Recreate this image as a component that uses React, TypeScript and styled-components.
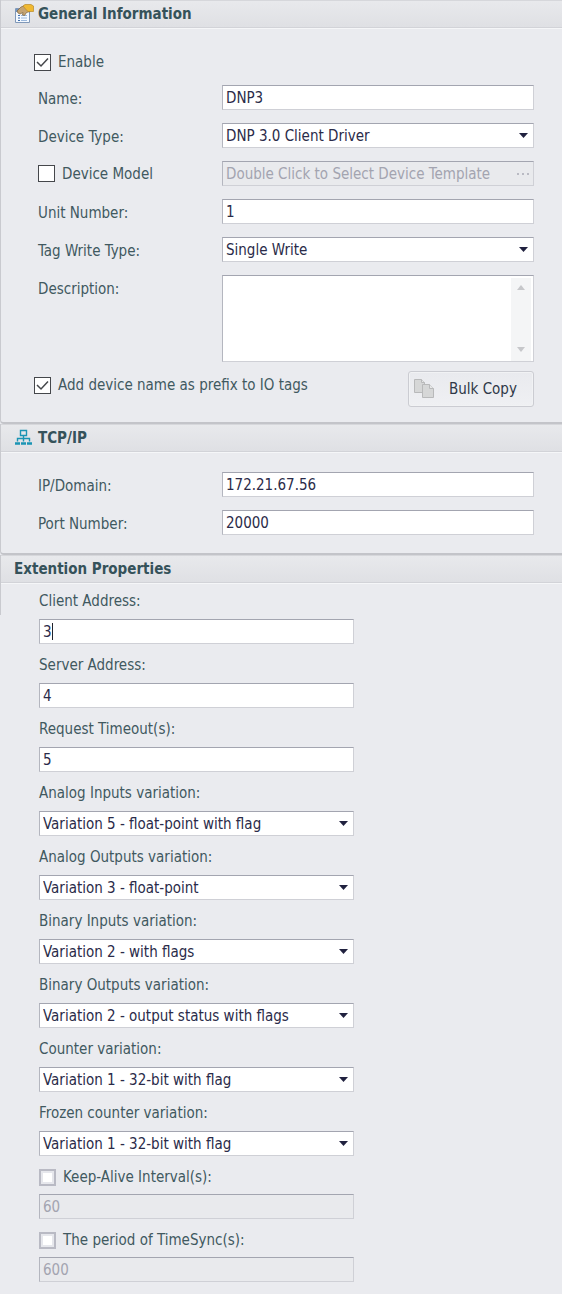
import React, { useId, useState } from "react";
import styled, { createGlobalStyle, css } from "styled-components";

const GlobalStyle = createGlobalStyle`
  *, *::before, *::after { box-sizing: border-box; }
  body {
    margin: 0;
    background: #eaebef;
    color: #41595f;
    font-family: "DejaVu Sans Condensed", Tahoma, "Noto Sans", sans-serif;
    font-size: 15px;
    line-height: 20px;
  }
`;

const Page = styled.main`
  display: flex;
  flex-direction: column;
  padding-bottom: 11px;
`;

const Panel = styled.section`
  border-left: 1px solid #c9cacf;
  border-bottom: 2px solid #c3c4c9;
  border-bottom-left-radius: 4px;
`;

const OpenPanel = styled.section`
  padding-left: 1px;
  background: linear-gradient(#c9cacf, #c9cacf) 0 0 / 1px 60px no-repeat;
`;

const PanelHeader = styled.header`
  display: flex;
  align-items: center;
  gap: 4px;
  height: 28px;
  padding-left: 13px;
  border-top: 1px solid #d6d7db;
  border-bottom: 1px solid #d2d3d8;
  box-shadow: 0 1px 0 #f5f6f8;
  background: linear-gradient(#e8e9ec, #dfe0e4);
`;

const PanelTitle = styled.h2`
  margin: 0;
  color: #35525a;
  font-size: 15px;
  line-height: 20px;
  font-weight: 700;
`;

const PanelBody = styled.div`
  display: flex;
  flex-direction: column;
  gap: 13px;
  padding: 20px 28px 18px 37px;
`;

const GeneralBody = styled(PanelBody)`
  padding-top: 24px;
  padding-bottom: 15px;
`;

const Row = styled.div`
  display: grid;
  grid-template-columns: 184px minmax(0, 1fr);
  align-items: start;
`;

const RowLabel = styled.label`
  padding-top: 4px;
  line-height: 20px;
`;

const CheckLabel = styled.label<{ $outdent?: boolean }>`
  display: flex;
  align-items: center;
  gap: 7px;
  margin-left: ${(p) => (p.$outdent ? "-4px" : "0")};
`;

const RowCheckLabel = styled(CheckLabel)`
  height: 25px;
`;

const CheckBox = styled.input<{ $soft?: boolean }>`
  appearance: none;
  flex: none;
  width: 17px;
  height: 17px;
  margin: 0;
  border: ${(p) => (p.$soft ? "2px solid #b9bac4" : "1px solid #45474b")};
  background: #fff;
  box-shadow: ${(p) => (p.$soft ? "inset 0 0 0 2px #e6e7ec" : "none")};
`;

const CheckWrap = styled.span`
  position: relative;
  display: flex;
  svg {
    position: absolute;
    inset: 0;
    pointer-events: none;
  }
`;

const fieldLook = css`
  display: block;
  width: 100%;
  height: 25px;
  margin: 0;
  padding: 0 3px;
  border: 1px solid #cfd0d6;
  border-top-color: #a3a5b0;
  border-left-color: #b4b6bf;
  border-radius: 0;
  outline: none;
  background: #fff;
  color: #2a2b49;
  font: inherit;
`;

const TextField = styled.input`
  ${fieldLook}
  &:disabled, &::placeholder {
    color: #a3a4b0;
    opacity: 1;
  }
  &:disabled { background: #e9eaed; }
`;

const SelectField = styled.select`
  ${fieldLook}
  appearance: none;
  padding-right: 20px;
`;

const FieldWrap = styled.div`
  position: relative;
  min-width: 0;
`;

const DropArrow = styled.svg`
  position: absolute;
  top: 10px;
  right: 6px;
  pointer-events: none;
`;

const Ellipsis = styled.svg`
  position: absolute;
  top: 12px;
  right: 4px;
`;

const Caret = styled.span`
  position: absolute;
  top: 4px;
  left: calc(4px + 1ch);
  width: 1px;
  height: 17px;
  background: #20222c;
`;

const DescriptionBox = styled.textarea`
  ${fieldLook}
  height: 87px;
  resize: none;
`;

const ScrollTrack = styled.span`
  position: absolute;
  top: 3px;
  right: 3px;
  bottom: 1px;
  width: 20px;
  display: flex;
  flex-direction: column;
  align-items: center;
  justify-content: space-between;
  padding: 7px 0 9px;
  background: #f4f5f6;
`;

const PanelFooter = styled.div`
  display: flex;
  align-items: flex-start;
  justify-content: space-between;
  margin-top: -4px;
`;

const FooterCheck = styled.div`
  padding-top: 4px;
`;

const CopyButton = styled.button`
  display: flex;
  align-items: center;
  gap: 14px;
  width: 126px;
  height: 36px;
  padding: 0 4px;
  border: 1px solid #cbccd2;
  border-radius: 3px;
  background: linear-gradient(#e9eaee, #eff0f3);
  box-shadow: inset 0 0 0 1px #f1f2f4;
  color: #2f3847;
  font: inherit;
`;

const ExtensionBody = styled.div`
  display: flex;
  flex-direction: column;
  gap: 11px;
  max-width: 353px;
  padding: 8px 0 0 38px;
`;

const StackedField = styled.div<{ $tight?: boolean }>`
  display: flex;
  flex-direction: column;
  gap: ${(p) => (p.$tight ? "7px" : "8px")};
`;

function PropertiesIcon() {
  return (
    <svg width="20" height="20" viewBox="0 0 20 20" aria-hidden="true">
      <path d="M1.500 4.500h14v14h-14z" fill="#f4f9ff" stroke="#8098b8" />
      <path d="M2 5h13v3H2z" fill="#6f95c4" />
      <path d="M4 11.500h2M4 14h2M4 16.500h2" stroke="#3f6fb0" />
      <path d="M7 11.500h6M7 14h6M7 16.500h6" stroke="#9bb8dc" />
      <path d="M3 7l4-4 4-1.500h5v6l-3.500 1-2 3-2-.5.500-2.500-3 1.500-2-1z" fill="#c4a473" stroke="#806238" strokeWidth=".7" />
      <path d="M9 2l2-1.500h6L19.500 2v5.500H14L11.500 5z" fill="#f0b932" stroke="#b98928" strokeWidth=".7" />
    </svg>
  );
}

function NetworkIcon() {
  return (
    <svg width="20" height="20" viewBox="0 0 20 20" fill="none" stroke="#1a94b4" aria-hidden="true">
      <path d="M6.500 2.500h6v5h-6zM9.500 7.500v6M3.500 13.500v-3h12v3" strokeWidth="1.400" />
      <path d="M1 15.500h5M7 15.500h5M13 15.500h5" strokeWidth="2.400" />
    </svg>
  );
}

function CopyIcon() {
  return (
    <svg width="22" height="22" viewBox="0 0 22 22" fill="#d6d7d7" stroke="#b8b9ba" aria-hidden="true">
      <path d="M1.500 1.500h7l3 3v10h-10z" />
      <path d="M9.500 6.500h7l4 4v9h-11z" />
      <path d="M8.500 1.500v3h3M16.500 6.500v4h4" fill="#e6e7e7" />
    </svg>
  );
}

function Check({ checked, soft }: { checked?: boolean; soft?: boolean }) {
  const [on, setOn] = useState(!!checked);
  return (
    <CheckWrap>
      <CheckBox type="checkbox" $soft={soft} checked={on} onChange={() => setOn(!on)} />
      {on && (
        <svg width="17" height="17" viewBox="0 0 17 17" fill="none" stroke="#45474b" strokeWidth="1.500">
          <path d="M3 8l4 4 7-7.500" />
        </svg>
      )}
    </CheckWrap>
  );
}

function Select({ id, value }: { id: string; value: string }) {
  return (
    <FieldWrap>
      <SelectField id={id} defaultValue={value}>
        <option>{value}</option>
      </SelectField>
      <DropArrow width="9" height="5" viewBox="0 0 9 5" aria-hidden="true">
        <path d="M0 0h9L4.500 5z" fill="#20213f" />
      </DropArrow>
    </FieldWrap>
  );
}

function FormRow({ label, value, select }: { label: string; value: string; select?: boolean }) {
  const id = useId();
  return (
    <Row>
      <RowLabel htmlFor={id}>{label}</RowLabel>
      {select ? <Select id={id} value={value} /> : <TextField id={id} defaultValue={value} />}
    </Row>
  );
}

function Stacked({ label, value, select, caret }: { label: string; value: string; select?: boolean; caret?: boolean }) {
  const id = useId();
  return (
    <StackedField>
      <label htmlFor={id}>{label}</label>
      {select ? (
        <Select id={id} value={value} />
      ) : (
        <FieldWrap>
          <TextField id={id} defaultValue={value} />
          {caret && <Caret />}
        </FieldWrap>
      )}
    </StackedField>
  );
}

function OptionalField({ label, value }: { label: string; value: string }) {
  return (
    <StackedField $tight>
      <CheckLabel>
        <Check soft />
        {label}
      </CheckLabel>
      <TextField aria-label={label} defaultValue={value} disabled />
    </StackedField>
  );
}

const variations = [
  ["Analog Inputs variation:", "Variation 5 - float-point with flag"],
  ["Analog Outputs variation:", "Variation 3 - float-point"],
  ["Binary Inputs variation:", "Variation 2 - with flags"],
  ["Binary Outputs variation:", "Variation 2 - output status with flags"],
  ["Counter variation:", "Variation 1 - 32-bit with flag"],
  ["Frozen counter variation:", "Variation 1 - 32-bit with flag"],
];

export default function App() {
  return (
    <>
      <GlobalStyle />
      <Page>
        <Panel>
          <PanelHeader>
            <PropertiesIcon />
            <PanelTitle>General Information</PanelTitle>
          </PanelHeader>
          <GeneralBody>
            <CheckLabel $outdent>
              <Check checked />
              Enable
            </CheckLabel>
            <FormRow label="Name:" value="DNP3" />
            <FormRow label="Device Type:" value="DNP 3.0 Client Driver" select />
            <Row>
              <RowCheckLabel>
                <Check />
                Device Model
              </RowCheckLabel>
              <FieldWrap>
                <TextField aria-label="Device template" placeholder="Double Click to Select Device Template" disabled />
                <Ellipsis width="14" height="3" viewBox="0 0 14 3" fill="#b9bac3" aria-hidden="true">
                  <path d="M1 0h2v2H1zM6 0h2v2H6zM11 0h2v2h-2z" />
                </Ellipsis>
              </FieldWrap>
            </Row>
            <FormRow label="Unit Number:" value="1" />
            <FormRow label="Tag Write Type:" value="Single Write" select />
            <Row>
              <RowLabel htmlFor="description">Description:</RowLabel>
              <FieldWrap>
                <DescriptionBox id="description" />
                <ScrollTrack aria-hidden="true">
                  <svg width="8" height="5" viewBox="0 0 8 5"><path d="M0 5h8L4 0z" fill="#c6c7ca" /></svg>
                  <svg width="8" height="5" viewBox="0 0 8 5"><path d="M0 0h8L4 5z" fill="#c6c7ca" /></svg>
                </ScrollTrack>
              </FieldWrap>
            </Row>
            <PanelFooter>
              <FooterCheck>
                <CheckLabel $outdent>
                  <Check checked />
                  Add device name as prefix to IO tags
                </CheckLabel>
              </FooterCheck>
              <CopyButton type="button">
                <CopyIcon />
                Bulk Copy
              </CopyButton>
            </PanelFooter>
          </GeneralBody>
        </Panel>
        <Panel>
          <PanelHeader>
            <NetworkIcon />
            <PanelTitle>TCP/IP</PanelTitle>
          </PanelHeader>
          <PanelBody>
            <FormRow label="IP/Domain:" value="172.21.67.56" />
            <FormRow label="Port Number:" value="20000" />
          </PanelBody>
        </Panel>
        <OpenPanel>
          <PanelHeader>
            <PanelTitle>Extention Properties</PanelTitle>
          </PanelHeader>
          <ExtensionBody>
            <Stacked label="Client Address:" value="3" caret />
            <Stacked label="Server Address:" value="4" />
            <Stacked label="Request Timeout(s):" value="5" />
            {variations.map(([label, value]) => (
              <Stacked key={label} label={label} value={value} select />
            ))}
            <OptionalField label="Keep-Alive Interval(s):" value="60" />
            <OptionalField label="The period of TimeSync(s):" value="600" />
          </ExtensionBody>
        </OpenPanel>
      </Page>
    </>
  );
}
